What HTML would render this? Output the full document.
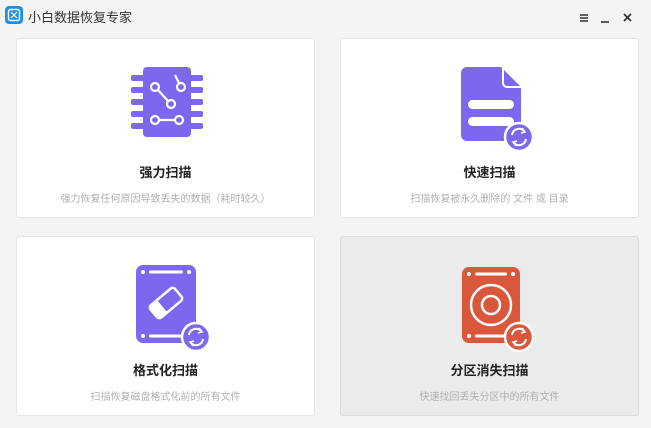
<!DOCTYPE html>
<html><head><meta charset="utf-8"><style>
*{margin:0;padding:0;box-sizing:border-box}
body{width:651px;height:428px;background:#f4f4f4;font-family:"Liberation Sans","Noto Sans CJK SC",sans-serif;position:relative;overflow:hidden}
.tb{position:absolute;left:0;top:0;width:651px;height:34px}
.logo{position:absolute;left:5px;top:6px;width:18px;height:18px;border-radius:4px;background:#1e8fe6}
.ttl{position:absolute;left:28px;top:7px;font-size:13px;color:#333}
.card{position:absolute;width:299px;height:180px;background:#fff;border:1px solid #e6e6e6;border-radius:3px}
.card.g{background:#ebebeb;border-color:#dcdcdc}
.card svg{position:absolute}
.t{position:absolute;left:0;width:100%;top:123px;text-align:center;font-size:13px;font-weight:bold;color:#222}
.d{position:absolute;left:0;width:100%;top:151px;text-align:center;font-size:10px;color:#b0b0b0}
</style></head><body>
<div class="tb">
<div class="logo"><svg width="18" height="18" viewBox="0 0 18 18"><rect x="3.5" y="3.5" width="11" height="11" rx="2" fill="none" stroke="#fff" stroke-width="1.4"/><path d="M6 12L12 6M6 6l6 6" stroke="#fff" stroke-width="1.2"/></svg></div>
<div class="ttl">小白数据恢复专家</div>
<svg style="position:absolute;left:579px;top:12px" width="60" height="12" viewBox="0 0 60 12">
<path d="M1 3h8M1 6h8M1 9h8" stroke="#333" stroke-width="1.6"/>
<path d="M22 10h8" stroke="#333" stroke-width="1.6"/>
<path d="M45 2l7 7M52 2l-7 7" stroke="#333" stroke-width="1.8"/>
</svg>
</div>

<div class="card" style="left:16px;top:38px">
<svg style="left:112px;top:26px" width="76" height="74" viewBox="0 0 76 74">
<g fill="#7c68ee">
<rect x="14" y="2" width="48" height="70" rx="4"/>
<rect x="2" y="10" width="14" height="6" rx="2"/><rect x="2" y="22" width="14" height="6" rx="2"/><rect x="2" y="34" width="14" height="6" rx="2"/><rect x="2" y="46" width="14" height="6" rx="2"/><rect x="2" y="58" width="14" height="6" rx="2"/>
<rect x="60" y="10" width="14" height="6" rx="2"/><rect x="60" y="22" width="14" height="6" rx="2"/><rect x="60" y="34" width="14" height="6" rx="2"/><rect x="60" y="46" width="14" height="6" rx="2"/><rect x="60" y="58" width="14" height="6" rx="2"/>
</g>
<g fill="none" stroke="#fff" stroke-width="2.2">
<circle cx="26" cy="22" r="4"/><circle cx="42" cy="39" r="4"/><circle cx="52" cy="22" r="4"/><circle cx="26" cy="55" r="4"/><circle cx="50" cy="55" r="4"/>
<path d="M29 25l10 11M50 18l-4-8M30 55h16"/>
</g></svg>
<div class="t">强力扫描</div><div class="d">强力恢复任何原因导致丢失的数据（耗时较久）</div>
</div>

<div class="card" style="left:340px;top:38px">
<svg style="left:118px;top:26px" width="78" height="88" viewBox="0 0 78 88">
<path d="M8 2h34l20 20v48a6 6 0 0 1-6 6H8a6 6 0 0 1-6-6V8a6 6 0 0 1 6-6z" fill="#7c68ee"/>
<path d="M44 2v16a4 4 0 0 0 4 4h14" fill="none" stroke="#fff" stroke-width="2"/>
<rect x="9" y="35" width="46" height="9" rx="4.5" fill="#fff"/><rect x="9" y="52" width="46" height="9" rx="4.5" fill="#fff"/>
<circle cx="60" cy="72" r="14" fill="#7c68ee" stroke="#fff" stroke-width="2.5"/>
<path d="M53 70a7 7 0 0 1 12-4M67 74a7 7 0 0 1-12 4" fill="none" stroke="#fff" stroke-width="2"/>
<path d="M63 63l3 4-4 1M57 81l-3-4 4-1" fill="none" stroke="#fff" stroke-width="1.6"/>
</svg>
<div class="t">快速扫描</div><div class="d">扫描恢复被永久删除的 文件 或 目录</div>
</div>

<div class="card" style="left:16px;top:236px">
<svg style="left:117px;top:26px" width="80" height="90" viewBox="0 0 80 90">
<rect x="2" y="2" width="60" height="78" rx="7" fill="#7c68ee"/>
<g fill="#fff"><circle cx="9" cy="9" r="2"/><circle cx="55" cy="9" r="2"/><circle cx="9" cy="73" r="2"/><circle cx="55" cy="73" r="2"/><rect x="15" y="7.5" width="34" height="3" rx="1.5"/><rect x="15" y="71.5" width="34" height="3" rx="1.5"/></g>
<g transform="rotate(-40 32 40)"><rect x="16" y="32" width="32" height="16" rx="3" fill="none" stroke="#fff" stroke-width="2.5"/><rect x="17" y="33" width="10" height="14" fill="#fff"/></g>
<circle cx="62" cy="74" r="14" fill="#7c68ee" stroke="#fff" stroke-width="2.5"/>
<path d="M55 72a7 7 0 0 1 12-4M69 76a7 7 0 0 1-12 4" fill="none" stroke="#fff" stroke-width="2"/>
<path d="M65 65l3 4-4 1M59 83l-3-4 4-1" fill="none" stroke="#fff" stroke-width="1.6"/>
</svg>
<div class="t">格式化扫描</div><div class="d">扫描恢复磁盘格式化前的所有文件</div>
</div>

<div class="card g" style="left:340px;top:236px">
<svg style="left:119px;top:28px" width="80" height="90" viewBox="0 0 80 90">
<rect x="2" y="2" width="58" height="76" rx="7" fill="#d9573b"/>
<g fill="#fff"><circle cx="9" cy="9" r="2"/><circle cx="53" cy="9" r="2"/><circle cx="9" cy="71" r="2"/><circle cx="53" cy="71" r="2"/><rect x="15" y="7.5" width="32" height="3" rx="1.5"/><rect x="15" y="69.5" width="32" height="3" rx="1.5"/></g>
<circle cx="31" cy="40" r="20" fill="none" stroke="#fff" stroke-width="2.5"/>
<circle cx="31" cy="40" r="9" fill="none" stroke="#fff" stroke-width="2.5"/>
<circle cx="59" cy="72" r="14" fill="#d9573b" stroke="#fff" stroke-width="2.5"/>
<path d="M52 70a7 7 0 0 1 12-4M66 74a7 7 0 0 1-12 4" fill="none" stroke="#fff" stroke-width="2"/>
<path d="M62 63l3 4-4 1M56 81l-3-4 4-1" fill="none" stroke="#fff" stroke-width="1.6"/>
</svg>
<div class="t">分区消失扫描</div><div class="d">快速找回丢失分区中的所有文件</div>
</div>
</body></html>
